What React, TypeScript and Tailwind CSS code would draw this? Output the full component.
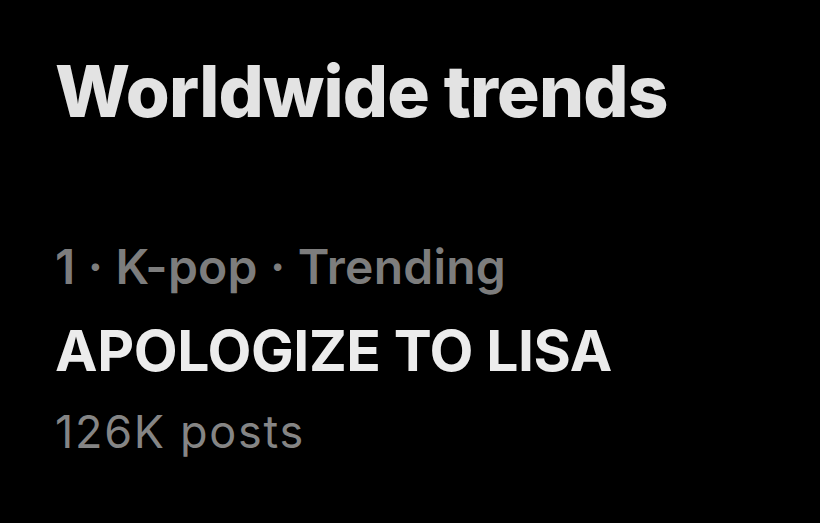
export default function App() {
  return (
    <div className="w-[820px] h-[523px] bg-black overflow-hidden flex flex-col pl-[55px] pt-[51px]" style={{ fontFamily: "Inter, 'Liberation Sans', sans-serif" }}>
      <div className="text-[71px] leading-[80px] font-extrabold text-[#e3e3e3] tracking-[-0.8px] whitespace-nowrap">Worldwide trends</div>
      <div className="mt-[108px] text-[48px] leading-[56px] font-semibold text-[#7d7d7d] tracking-[0.2px] whitespace-nowrap">1 · K-pop · Trending</div>
      <div className="mt-[21px] text-[57px] leading-[70px] font-bold text-[#ececec] tracking-[-0.4px] whitespace-nowrap">APOLOGIZE TO LISA</div>
      <div className="mt-[18px] text-[45px] leading-[56px] font-normal text-[#858585] tracking-[1.7px] whitespace-nowrap">126K posts</div>
    </div>
  );
}
